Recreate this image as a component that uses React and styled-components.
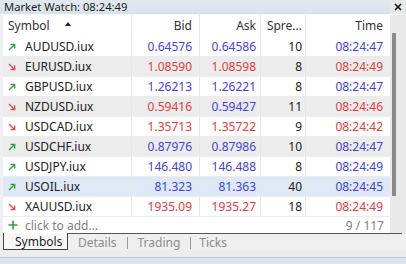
import React from "react";
import styled, { createGlobalStyle } from "styled-components";

const Global = createGlobalStyle`
  html, body { margin: 0; padding: 0; background: #eeeff1; }
  body { font-family: "Noto Sans", "Open Sans", sans-serif; font-size: 12px; color: #222; }
`;

const BLUE = "#4242e0";
const RED = "#e23c3c";

const rows = [
  { s: "AUDUSD.iux", up: true, bid: "0.64576", ask: "0.64586", bc: BLUE, ac: BLUE, sp: 10, t: "08:24:47", tc: BLUE },
  { s: "EURUSD.iux", up: false, bid: "1.08590", ask: "1.08598", bc: RED, ac: RED, sp: 8, t: "08:24:49", tc: RED },
  { s: "GBPUSD.iux", up: true, bid: "1.26213", ask: "1.26221", bc: BLUE, ac: BLUE, sp: 8, t: "08:24:47", tc: BLUE },
  { s: "NZDUSD.iux", up: false, bid: "0.59416", ask: "0.59427", bc: RED, ac: BLUE, sp: 11, t: "08:24:46", tc: RED },
  { s: "USDCAD.iux", up: false, bid: "1.35713", ask: "1.35722", bc: RED, ac: RED, sp: 9, t: "08:24:42", tc: RED },
  { s: "USDCHF.iux", up: true, bid: "0.87976", ask: "0.87986", bc: BLUE, ac: BLUE, sp: 10, t: "08:24:47", tc: BLUE },
  { s: "USDJPY.iux", up: true, bid: "146.480", ask: "146.488", bc: BLUE, ac: BLUE, sp: 8, t: "08:24:49", tc: BLUE },
  { s: "USOIL.iux", up: true, bid: "81.323", ask: "81.363", bc: BLUE, ac: BLUE, sp: 40, t: "08:24:45", tc: BLUE, sel: true },
  { s: "XAUUSD.iux", up: false, bid: "1935.09", ask: "1935.27", bc: RED, ac: RED, sp: 18, t: "08:24:49", tc: RED },
];

const Window = styled.div`
  width: 406px;
  height: 264px;
  display: flex;
  flex-direction: column;
  overflow: hidden;
`;

const TitleBar = styled.div`
  height: 14px;
  flex-shrink: 0;
  display: flex;
  align-items: center;
  justify-content: space-between;
  background: linear-gradient(#e2e8ef, #d9e2ec);
  padding-left: 4px;
  border-bottom: 1px solid #f6f8fa;
`;

const Title = styled.span`
  font-size: 11.2px;
  line-height: 14px;
  color: #1e1e1e;
`;

const Close = styled.div`
  width: 16px;
  height: 14px;
  display: flex;
  align-items: center;
  justify-content: center;
  background: #e6e8ea;
`;

const Main = styled.div`
  height: 218px;
  flex-shrink: 0;
  display: flex;
`;

const List = styled.div`
  width: 387px;
  margin-left: 3px;
  background: #fff;
  display: flex;
  flex-direction: column;
`;

const Grid = styled.div`
  display: grid;
  grid-template-columns: 129px 68px 61px 45px 84px;
  height: ${(p) => p.h}px;
  flex-shrink: 0;
  background: ${(p) => p.bg || "#fff"};
  border-bottom: 1px solid ${(p) => (p.line ? "#ececec" : "transparent")};
  box-sizing: border-box;
`;

const Cell = styled.div`
  display: flex;
  align-items: center;
  justify-content: ${(p) => (p.left ? "flex-start" : "flex-end")};
  padding: 0 ${(p) => p.pr ?? 4}px 0 ${(p) => p.pl ?? 0}px;
  border-right: 1px solid ${(p) => (p.last ? "transparent" : "#e6e6e6")};
  color: ${(p) => p.c || "#222"};
  white-space: nowrap;
  gap: ${(p) => p.gap ?? 0}px;
`;

const HeadCell = styled(Cell)`
  color: #333;
`;

const SortMark = styled.svg`
  margin-left: 15px;
  margin-top: -4px;
`;

const Footer = styled.div`
  height: 16px;
  display: flex;
  align-items: center;
  justify-content: space-between;
  padding: 0 6px 0 5px;
  color: #808080;
`;

const AddLabel = styled.span`
  display: flex;
  align-items: center;
  gap: 7px;
`;

const Track = styled.div`
  flex: 1;
  background: #e9e9ea;
  padding: 18px 0 0 2px;
`;

const Thumb = styled.div`
  width: 4px;
  height: 163px;
  background: #8a8a8a;
`;

const TabStrip = styled.div`
  height: 17px;
  flex-shrink: 0;
  display: flex;
  align-items: stretch;
  background: #efefef;
  position: relative;
  &::before {
    content: "";
    position: absolute;
    left: 68px;
    right: 4px;
    top: 0;
    height: 1px;
    background: #555;
  }
`;

const ActiveTab = styled.div`
  margin-left: 3px;
  width: 65px;
  box-sizing: border-box;
  border: 1px solid #444;
  border-top: none;
  background: #f7f7f7;
  display: flex;
  align-items: center;
  padding-left: 11px;
  color: #1e1e1e;
`;

const Tab = styled.div`
  display: flex;
  align-items: center;
  padding: 0 ${(p) => p.pr ?? 10}px 0 ${(p) => p.pl ?? 10}px;
  color: #8c8c8c;
  border-left: ${(p) => (p.sep ? "1px solid #9a9a9a" : "none")};
  height: 12px;
  align-self: center;
  margin-top: 2px;
`;

const BottomPad = styled.div`
  height: 7px;
  flex-shrink: 0;
  background: #ededed;
  border-bottom: 1px solid #c4c8cc;
`;

const Rest = styled.div`
  flex: 1;
  background: #dde3ea;
`;

const Arrow = ({ up }) => (
  <svg width="8" height="8" viewBox="0 0 8 8">
    {up ? (
      <g stroke="#2f9e3f" strokeWidth="1.3" fill="none">
        <path d="M1 7 L6.5 1.5" />
        <path d="M2.5 1.3 H6.7 V5.5" />
      </g>
    ) : (
      <g stroke="#e0454f" strokeWidth="1.3" fill="none">
        <path d="M1 1 L6.5 6.5" />
        <path d="M2.5 6.7 H6.7 V2.5" />
      </g>
    )}
  </svg>
);

const Plus = () => (
  <svg width="10" height="10" viewBox="0 0 10 10">
    <path d="M5 0.5 V9.5 M0.5 5 H9.5" stroke="#3a9e3a" strokeWidth="1.6" />
  </svg>
);

const CloseIcon = () => (
  <svg width="8" height="8" viewBox="0 0 8 8">
    <path d="M1 1 L7 7 M7 1 L1 7" stroke="#111" strokeWidth="1.6" />
  </svg>
);

export default function App() {
  return (
    <>
      <Global />
      <Window>
        <TitleBar>
          <Title>Market Watch: 08:24:49</Title>
          <Close>
            <CloseIcon />
          </Close>
        </TitleBar>
        <Main>
          <List>
            <Grid h={22}>
              <HeadCell left pl={5}>
                Symbol
                <SortMark width="6" height="4" viewBox="0 0 6 4">
                  <path d="M0 4 L3 0 L6 4 Z" fill="#222" />
                </SortMark>
              </HeadCell>
              <HeadCell pr={7}>Bid</HeadCell>
              <HeadCell>Ask</HeadCell>
              <HeadCell pr={3}>Spre...</HeadCell>
              <HeadCell last pr={6}>Time</HeadCell>
            </Grid>
            {rows.map((r, i) => (
              <Grid
                key={r.s}
                h={20}
                line
                bg={r.sel ? "#dfe9f6" : i % 2 === 1 ? "#ececec" : "#fff"}
              >
                <Cell left pl={5} gap={9}>
                  <Arrow up={r.up} />
                  {r.s}
                </Cell>
                <Cell pr={7} c={r.bc}>{r.bid}</Cell>
                <Cell c={r.ac}>{r.ask}</Cell>
                <Cell pr={3}>{r.sp}</Cell>
                <Cell last pr={6} c={r.tc}>{r.t}</Cell>
              </Grid>
            ))}
            <Footer>
              <AddLabel>
                <Plus />
                click to add...
              </AddLabel>
              <span>9 / 117</span>
            </Footer>
          </List>
          <Track>
            <Thumb />
          </Track>
        </Main>
        <TabStrip>
          <ActiveTab>Symbols</ActiveTab>
          <Tab>Details</Tab>
          <Tab sep>Trading</Tab>
          <Tab sep pl={8}>Ticks</Tab>
        </TabStrip>
        <BottomPad />
        <Rest />
      </Window>
    </>
  );
}
